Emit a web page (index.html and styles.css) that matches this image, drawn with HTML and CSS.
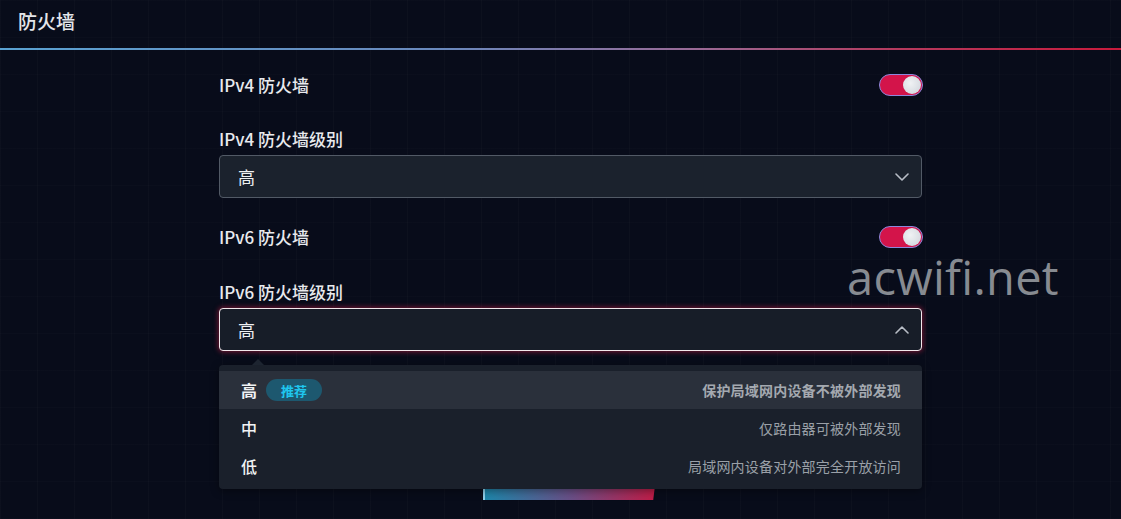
FILE: index.html
```html
<!DOCTYPE html>
<html lang="zh-CN">
<head>
<meta charset="utf-8">
<title>防火墙</title>
<link rel="stylesheet" href="styles.css">
</head>
<body>
<div class="page">
  <header class="topbar">
    <h1 class="title">防火墙</h1>
  </header>
  <div class="divider"></div>
  <main class="content">
    <div class="row">
      <span class="label">IPv4 防火墙</span>
      <span class="toggle"><span class="knob"></span></span>
    </div>
    <div class="field">
      <div class="label">IPv4 防火墙级别</div>
      <div class="select">
        <span>高</span>
        <svg class="chev" width="14" height="8" viewBox="0 0 14 8"><path d="M1 1 L7 7 L13 1" fill="none" stroke="#b8bdc6" stroke-width="1.6" stroke-linecap="round" stroke-linejoin="round"/></svg>
      </div>
    </div>
    <div class="row row2">
      <span class="label">IPv6 防火墙</span>
      <span class="toggle"><span class="knob"></span></span>
    </div>
    <div class="field field2">
      <div class="label">IPv6 防火墙级别</div>
      <div class="select open">
        <span>高</span>
        <svg class="chev" width="14" height="8" viewBox="0 0 14 8"><path d="M1 7 L7 1 L13 7" fill="none" stroke="#b8bdc6" stroke-width="1.6" stroke-linecap="round" stroke-linejoin="round"/></svg>
      </div>
      <div class="dropdown">
        <div class="opt active">
          <span class="opt-name">高<span class="badge">推荐</span></span>
          <span class="opt-desc">保护局域网内设备不被外部发现</span>
        </div>
        <div class="opt">
          <span class="opt-name">中</span>
          <span class="opt-desc">仅路由器可被外部发现</span>
        </div>
        <div class="opt">
          <span class="opt-name">低</span>
          <span class="opt-desc">局域网内设备对外部完全开放访问</span>
        </div>
      </div>
    </div>
    <div class="actions">
      <button class="apply">应用</button>
    </div>
  </main>
  <div class="watermark">acwifi.net</div>
</div>
</body>
</html>
```

FILE: styles.css
```css
* { box-sizing: border-box; }
html, body {
  margin: 0;
  padding: 0;
  height: 100%;
  overflow: hidden;
}
body {
  background-color: #080c1a;
  background-image:
    repeating-linear-gradient(90deg, rgba(255,255,255,0.018) 0 1px, transparent 1px 37px),
    repeating-linear-gradient(0deg, rgba(255,255,255,0.012) 0 1px, transparent 1px 37px);
  font-family: "Noto Sans CJK SC", "Noto Sans", sans-serif;
  color: #e8eaee;
}
.page {
  position: relative;
  height: 519px;
}
.topbar {
  height: 48px;
  display: flex;
  align-items: center;
  padding-left: 18px;
}
.title {
  margin: 0;
  font-size: 19px;
  font-weight: 500;
  color: #e4e6ea;
  line-height: 1;
  position: relative;
  top: -4px;
}
.divider {
  height: 2px;
  background: linear-gradient(90deg, #5aa2d2 0%, #6a88bc 40%, #9a6a96 62%, #b53a5e 80%, #c81a3c 100%);
}
.content {
  width: 703px;
  margin-left: 219px;
  padding-top: 24px;
  position: relative;
}
.label {
  font-size: 17px;
  font-weight: 500;
  color: #e8eaee;
  line-height: 24px;
}
.row {
  height: 22px;
  display: flex;
  align-items: center;
  justify-content: space-between;
}
.row2 { margin-top: 28px; }
.field { margin-top: 31px; }
.field2 { margin-top: 32px; position: relative; }
.field .label { margin-bottom: 4px; }
.toggle {
  width: 44px;
  height: 22px;
  margin-right: -1px;
  border-radius: 11px;
  background: #d3144a;
  border: 1.5px solid #8e88dc;
  display: flex;
  align-items: center;
  justify-content: flex-end;
  padding-right: 1px;
}
.knob {
  width: 18px;
  height: 18px;
  border-radius: 50%;
  background: radial-gradient(circle at 40% 40%, #f0f2f4 0%, #d8dce2 70%, #b8bcc6 100%);
}
.select {
  height: 43px;
  border: 1px solid #525a66;
  border-radius: 4px;
  background: #1b222d;
  display: flex;
  align-items: center;
  justify-content: space-between;
  padding: 0 12px 0 18px;
  font-size: 17px;
  color: #eef0f2;
}
.select.open {
  border-color: #f2e8ec;
  box-shadow: 0 0 5px 1px rgba(200, 30, 70, 0.55);
  background: #171d28;
}
.dropdown {
  position: absolute;
  left: 0;
  top: 85px;
  width: 703px;
  background: #1a202b;
  border-radius: 4px;
  padding: 6px 0 4px;
  box-shadow: 0 2px 8px rgba(0,0,0,0.4);
  z-index: 5;
}
.dropdown::before {
  content: "";
  position: absolute;
  top: -6px;
  left: 33px;
  border-left: 6px solid transparent;
  border-right: 6px solid transparent;
  border-bottom: 6px solid #1d2430;
}
.opt {
  height: 38px;
  display: flex;
  align-items: center;
  justify-content: space-between;
  padding: 0 21px 0 22px;
}
.opt.active { background: #2a303b; }
.opt-name {
  display: flex;
  align-items: center;
  font-size: 16px;
  font-weight: 500;
  color: #f0f2f4;
}
.active .opt-name { font-weight: 700; }
.badge {
  margin-left: 9px;
  width: 56px;
  height: 22px;
  border-radius: 11px;
  background: #1d586f;
  color: #1fc6ee;
  font-size: 13px;
  font-weight: 700;
  display: flex;
  align-items: center;
  justify-content: center;
}
.opt-desc {
  font-size: 14px;
  color: #9aa0a8;
  letter-spacing: 0.2px;
}
.active .opt-desc {
  font-size: 14px;
  letter-spacing: 0.2px;
  font-weight: 700;
  color: #a4a9b0;
}
.actions {
  margin-top: 105px;
  display: flex;
  justify-content: center;
}
.apply {
  width: 176px;
  height: 44px;
  border: none;
  border-left: 2px solid #8fd0ea;
  background: linear-gradient(90deg, #1e86aa 0%, #6a4e86 50%, #c41a44 100%);
  clip-path: polygon(0 0, 100% 0, 97% 100%, 0 100%);
  color: #fff;
  font-family: inherit;
  font-size: 16px;
  padding-bottom: 14px;
}
.watermark {
  position: absolute;
  left: 847px;
  top: 249px;
  font-family: "Open Sans", "DejaVu Sans", sans-serif;
  font-size: 47px;
  color: #878b91;
  line-height: 1.2;
  letter-spacing: 0.3px;
}
```
